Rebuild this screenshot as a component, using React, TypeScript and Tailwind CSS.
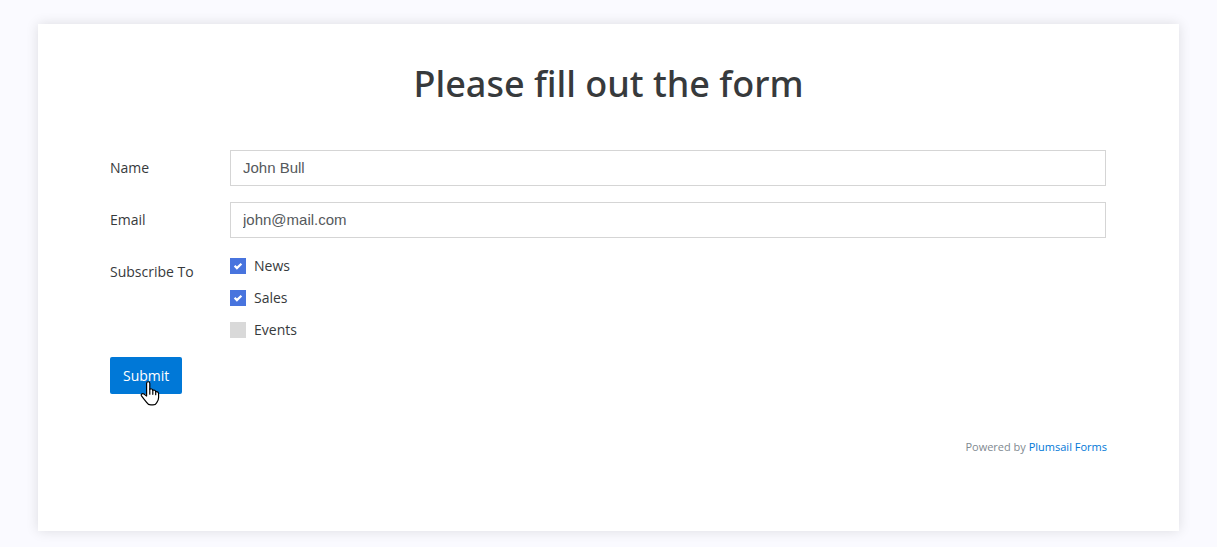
import { useState } from 'react';

const topics = ['News', 'Sales', 'Events'];

function Topic({ name, initial }: { name: string; initial: boolean }) {
  const [on, setOn] = useState(initial);
  return (
    <label className="flex h-8 items-center gap-2">
      <span className="grid size-4 place-items-center">
        <input
          type="checkbox"
          checked={on}
          onChange={() => setOn(!on)}
          className="col-start-1 row-start-1 size-4 appearance-none bg-[#d9d9d9] checked:bg-[#4874de]"
        />
        {on && (
          <svg viewBox="0 0 16 16" className="pointer-events-none z-10 col-start-1 row-start-1 size-4" fill="none" stroke="white" strokeWidth="2.2">
            <path d="M4.600 7.800l2.300 2.300 4.500-4.400" />
          </svg>
        )}
      </span>
      {name}
    </label>
  );
}

function Field({ id, label, type, value }: { id: string; label: string; type: string; value: string }) {
  return (
    <div className="flex items-center">
      <label htmlFor={id} className="w-30 shrink-0">{label}</label>
      <input
        id={id}
        type={type}
        defaultValue={value}
        className="h-9 min-w-0 flex-1 border border-[#d5d5d5] bg-white px-3 pb-0.5 font-['Liberation_Sans',Arial,sans-serif] text-[15px] text-[#55595c] outline-none"
      />
    </div>
  );
}

export default function App() {
  return (
    <div className="min-h-screen bg-[#fafaff] px-[38px] pt-6 pb-4 font-['Open_Sans','Noto_Sans',sans-serif] text-sm text-[#373a3c]">
      <main className="bg-white px-18 pt-8 pb-[75px] shadow-[0_0_12px_rgba(0,0,0,0.12)]">
        <h1 className="text-center font-['Noto_Sans',sans-serif] text-4xl leading-[56px] font-medium">Please fill out the form</h1>
        <form onSubmit={(e) => e.preventDefault()} className="mt-[38px] pr-px">
          <div className="flex flex-col gap-4">
            <Field id="name" label="Name" type="text" value="John Bull" />
            <Field id="email" label="Email" type="email" value="john@mail.com" />
          </div>
          <fieldset className="mt-3 flex" aria-labelledby="topics">
            <span id="topics" className="w-30 pt-3 leading-5">Subscribe To</span>
            <div>
              {topics.map((t) => <Topic key={t} name={t} initial={t !== 'Events'} />)}
            </div>
          </fieldset>
          <div className="relative mt-[11px] w-fit">
            <button type="submit" className="h-[37px] rounded-xs bg-[#0078d7] px-[13px] text-white">Submit</button>
            <svg viewBox="0 0 20 25" className="pointer-events-none absolute top-6 left-[30px] h-[25px] w-5" fill="white" stroke="black" strokeWidth="1.2" strokeLinejoin="round" strokeLinecap="round">
              <path d="M6.600 15V2.400c0-2.200 3.200-2.200 3.200 0v5.800c1.200-.8 2.800-.2 3 1.100 1.200-.5 2.700.1 2.900 1.400 1.500-.3 2.900.5 2.900 2.100v3.600c0 3-1.600 4.600-2.100 5.500-.6 1.400-1.800 2-3.500 2h-2.200c-2.100 0-3.300-1-4.200-2.500L4 18.200l-2.500-3.400c-1.100-1.600.9-2.900 2.500-1.700z" />
              <path d="M9.800 8.200v5M12.800 9.300v4M15.700 10.700v3" fill="none" />
            </svg>
          </div>
        </form>
        <footer className="mt-11 text-right text-[11px] leading-[18px] text-[#818a91]">
          Powered by <a href="#plumsail" className="text-[#0078d7]">Plumsail Forms</a>
        </footer>
      </main>
    </div>
  );
}
